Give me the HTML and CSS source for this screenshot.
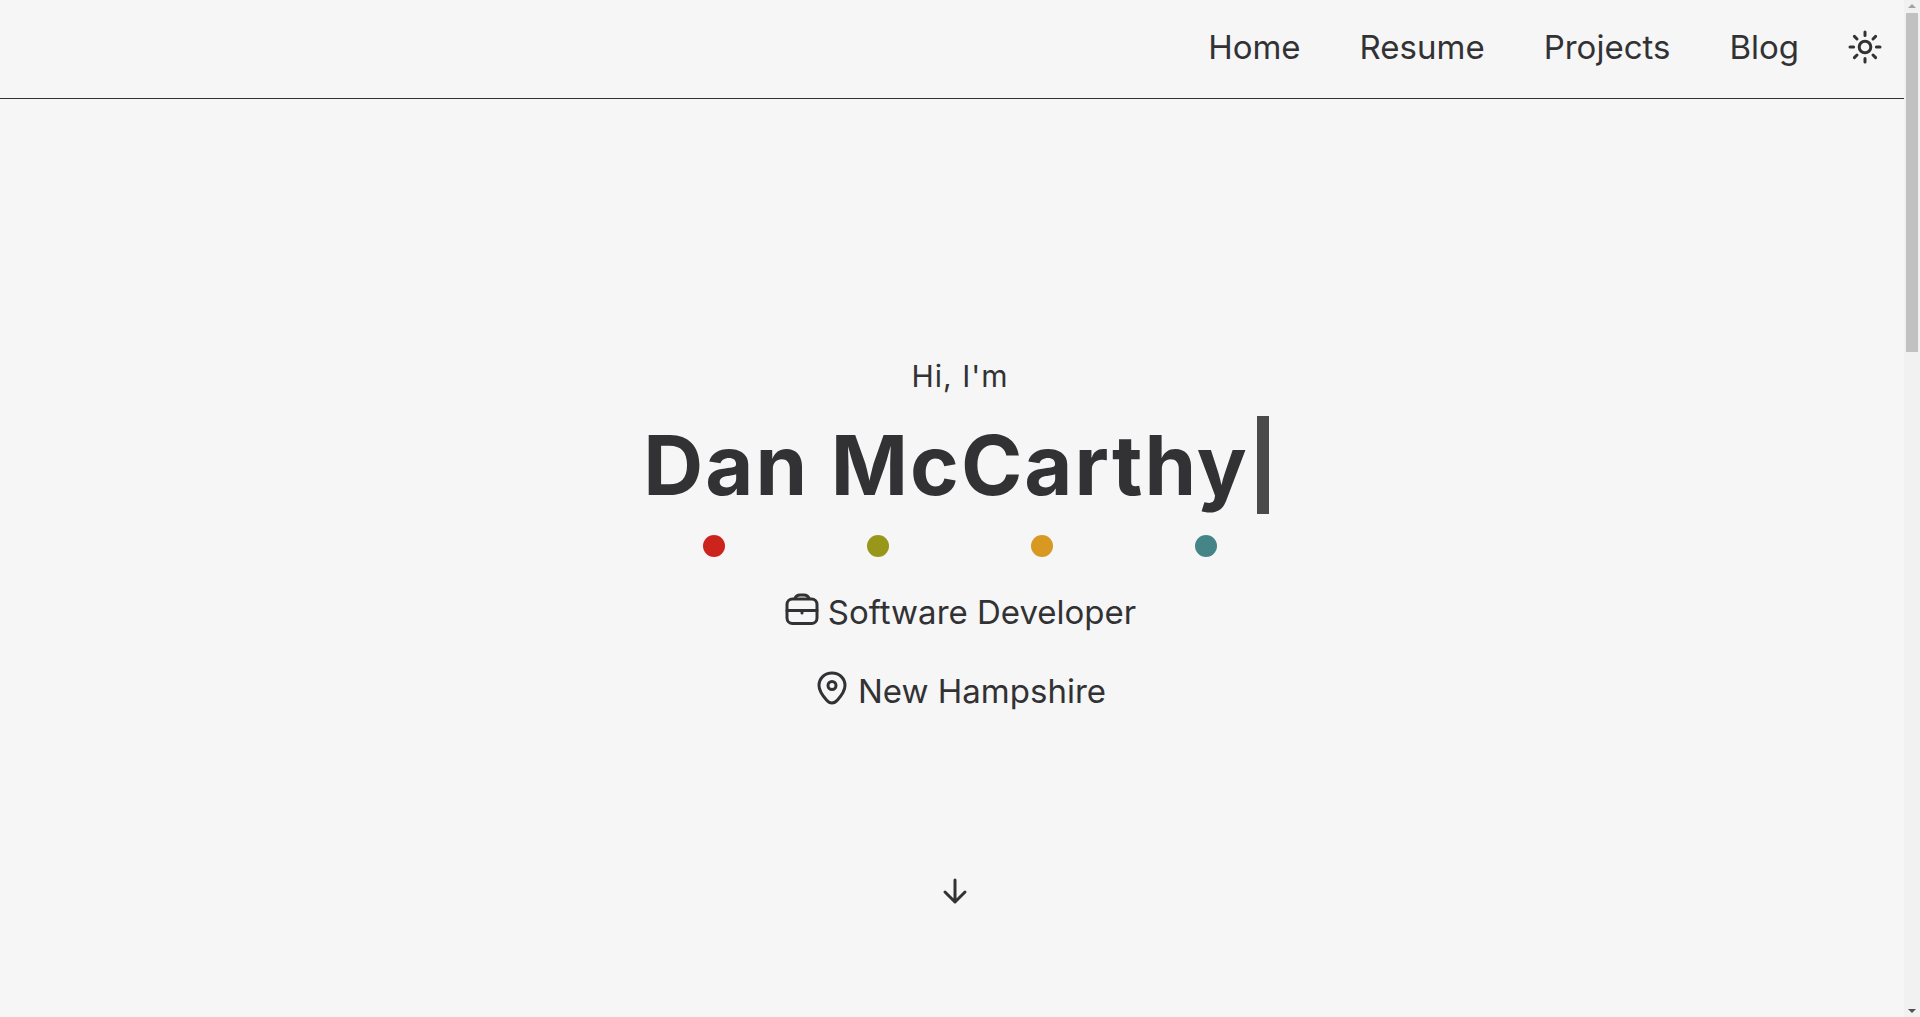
FILE: index.html
```html
<!DOCTYPE html>
<html lang="en">
<head>
<meta charset="utf-8">
<title>Dan McCarthy</title>
<link rel="stylesheet" href="styles.css">
</head>
<body>
<header class="header">
  <nav class="nav">
    <a href="#home">Home</a>
    <a href="#resume">Resume</a>
    <a href="#projects">Projects</a>
    <a href="#blog">Blog</a>
  </nav>
  <button class="theme" type="button" aria-label="Toggle theme">
    <svg class="icon" viewBox="0 0 36 36"><circle cx="18" cy="18" r="5.800"/><path d="M18 3v3.600M18 29.400V33M3 18h3.600M29.400 18H33M7.400 7.400l2.600 2.600M26 26l2.600 2.600M7.400 28.600L10 26M26 10l2.600-2.600"/></svg>
  </button>
</header>
<main class="hero" id="home">
  <p class="greeting">Hi, I'm</p>
  <h1 class="name">Dan McCarthy<span class="cursor"></span></h1>
  <div class="dots">
    <span class="dot red"></span>
    <span class="dot green"></span>
    <span class="dot yellow"></span>
    <span class="dot blue"></span>
  </div>
  <p class="fact">
    <svg class="icon" viewBox="0 0 36 36"><rect x="3" y="8" width="30" height="24.500" rx="5.500"/><path d="M3 19.500h30M11 7.500C12 4.500 13.500 4 16 4h4c2.500 0 4 .5 5 3.500M18 20v2"/></svg>
    Software Developer
  </p>
  <p class="fact">
    <svg class="icon" viewBox="0 0 36 36"><path d="M18 3C10.500 3 5 8.500 5 15.500c0 5 3.500 10 7.500 14.500 3.500 4 7.500 4 11 0C27.500 25.500 31 20.500 31 15.500 31 8.500 25.500 3 18 3z"/><circle cx="18" cy="15.500" r="4"/></svg>
    New Hampshire
  </p>
  <a class="more" href="#resume" aria-label="Scroll down">
    <svg class="icon" viewBox="0 0 36 36"><path d="M18 7v22M8 19l10 10 10-10"/></svg>
  </a>
</main>
<div class="scrollbar" aria-hidden="true">
  <svg class="step" viewBox="0 0 16 13"><path d="M4 8l4-4 4 4z" fill="#a3a3a3"/></svg>
  <span class="thumb"></span>
  <svg class="step last" viewBox="0 0 16 13"><path d="M4 5l4 4 4-4z" fill="#505050"/></svg>
</div>
</body>
</html>
```
FILE: styles.css
```css
* {
  box-sizing: border-box;
}

body {
  margin: 0;
  min-height: 100vh;
  background: #f6f6f6;
  color: #323234;
  font-family: Inter, "Liberation Sans", sans-serif;
  font-size: 33px;
  font-weight: 400;
  line-height: 46px;
  overflow: hidden;
}

p,
h1 {
  margin: 0;
}

.icon {
  width: 36px;
  height: 36px;
  flex: none;
  fill: none;
  stroke: currentColor;
  stroke-width: 3px;
  stroke-linecap: round;
  stroke-linejoin: round;
}

.header {
  display: flex;
  align-items: center;
  justify-content: flex-end;
  gap: 48px;
  height: 99px;
  margin-right: 16px;
  padding: 0 21px 4px 0;
  border-bottom: 1px solid #323234;
}

.nav {
  display: flex;
  gap: 59px;
}

.nav a {
  color: inherit;
  text-decoration: none;
}

.theme {
  display: flex;
  padding: 0;
  border: 0;
  background: none;
  color: inherit;
}

.hero {
  display: flex;
  flex-direction: column;
  align-items: center;
  padding-top: 254px;
}

.greeting {
  font-size: 30px;
  letter-spacing: 1px;
}

.name {
  display: flex;
  align-items: center;
  gap: 8px;
  margin-top: 17px;
  padding-right: 8px;
  font-size: 83px;
  font-weight: 700;
  line-height: 98px;
  letter-spacing: 2px;
}

.cursor {
  width: 12px;
  height: 98px;
  background: #4a4a4b;
}

.dots {
  display: grid;
  grid-template-columns: repeat(4, 164px);
  justify-items: center;
  margin: 21px 0 32px;
}

.dot {
  width: 22px;
  height: 22px;
  border-radius: 50%;
}

.red {
  background: #cc241d;
}

.green {
  background: #98971a;
}

.yellow {
  background: #d79921;
}

.blue {
  background: #458588;
}

.fact {
  display: flex;
  gap: 8px;
  margin-bottom: 33px;
}

.fact .icon {
  margin-top: 2px;
}

.more {
  margin-top: 126px;
  margin-right: 11px;
  color: inherit;
  line-height: 0;
}

.scrollbar {
  position: fixed;
  inset: 0 0 0 auto;
  display: flex;
  flex-direction: column;
  align-items: center;
  width: 16px;
  background: #f1f1f1;
}

.step {
  width: 16px;
  height: 13px;
}

.last {
  margin-top: auto;
}

.thumb {
  width: 12px;
  height: 339px;
  background: #c1c1c1;
}
```
